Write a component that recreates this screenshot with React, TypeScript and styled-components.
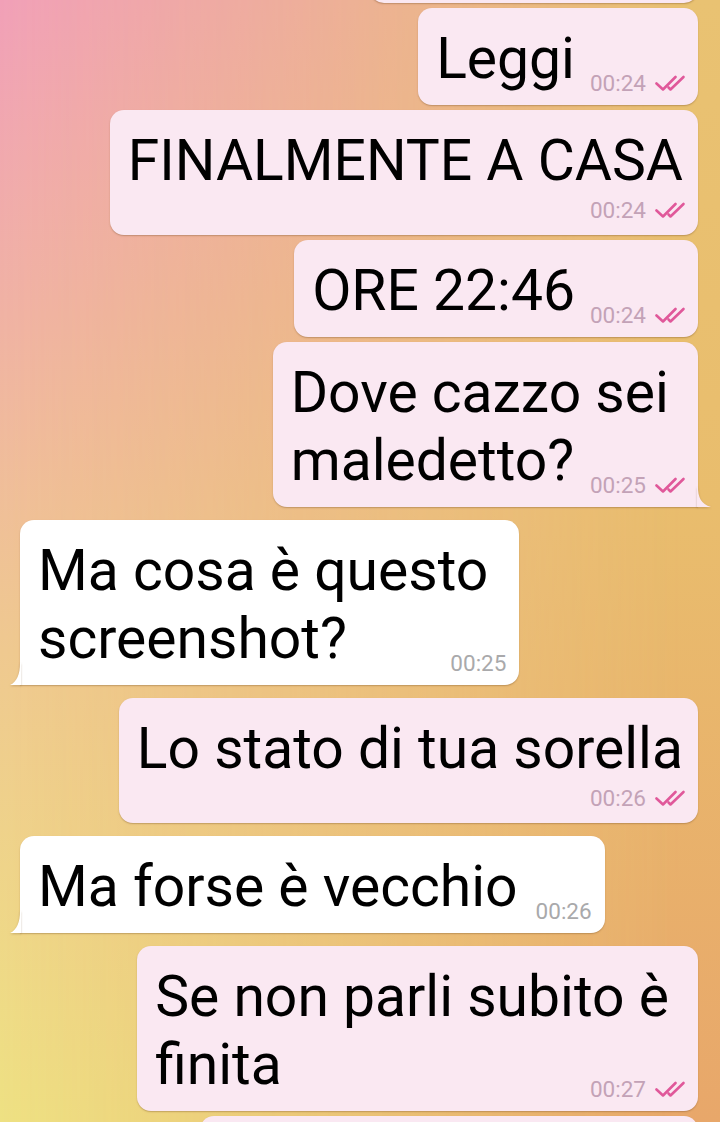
import styled, { createGlobalStyle } from 'styled-components';

const GlobalStyle = createGlobalStyle`
  html, body {
    margin: 0;
    padding: 0;
  }
  body {
    font-family: Roboto, "Noto Sans", "Liberation Sans", sans-serif;
  }
`;

const Screen = styled.div`
  position: relative;
  width: 720px;
  height: 1122px;
  overflow: hidden;
  background: linear-gradient(to bottom, #e9c272 0%, #e9bd6d 45%, #e8a76a 100%);

  &::before {
    content: '';
    position: absolute;
    inset: 0;
    background: linear-gradient(
      to bottom,
      #f1a0b8 0%,
      #f0b2a4 28%,
      #efc990 58%,
      #eee183 100%
    );
    -webkit-mask-image: linear-gradient(to right, #000 0%, rgba(0, 0, 0, 0.55) 45%, transparent 95%);
    mask-image: linear-gradient(to right, #000 0%, rgba(0, 0, 0, 0.55) 45%, transparent 95%);
  }
`;

const Feed = styled.div`
  position: relative;
  display: flex;
  flex-direction: column;
`;

const Bubble = styled.div<{ $out: boolean; $tail?: boolean; $newGroup?: boolean }>`
  position: relative;
  align-self: ${(p) => (p.$out ? 'flex-end' : 'flex-start')};
  margin: ${(p) => (p.$newGroup ? '13px' : '5px')} 22px 0 20px;
  display: flex;
  flex-direction: column;
  padding: 17px ${(p) => (p.$out ? '12px' : '13px')} 12px 18px;
  background: ${(p) => (p.$out ? '#fae8f2' : '#ffffff')};
  border-radius: 14px;
  ${(p) => p.$tail && (p.$out ? 'border-bottom-right-radius: 0;' : 'border-bottom-left-radius: 0;')}
  box-shadow: 0 1px 1.5px rgba(110, 70, 30, 0.35);
`;

const Peek = styled(Bubble)<{ $width: number; $height: number }>`
  width: ${(p) => p.$width}px;
  height: ${(p) => p.$height}px;
  box-sizing: border-box;
  padding: 0;
`;

const Line = styled.div<{ $out: boolean }>`
  font-size: 57px;
  line-height: 68px;
  color: #000;
  white-space: pre;
  padding-right: ${(p) => (p.$out ? '3px' : '4px')};
`;

const LastRow = styled.div`
  display: flex;
  align-items: flex-end;
`;

const Meta = styled.div<{ $out: boolean; $stacked?: boolean }>`
  display: flex;
  align-items: center;
  justify-content: flex-end;
  gap: 9px;
  flex-shrink: 0;
  margin-left: auto;
  padding-left: ${(p) => (p.$stacked ? '0' : p.$out ? '12px' : '14px')};
  margin-top: ${(p) => (p.$stacked ? '4px' : '0')};
  margin-bottom: ${(p) => (p.$stacked ? '2px' : '-1px')};
  font-size: 22.5px;
  line-height: 22px;
  color: ${(p) => (p.$out ? '#c3a2b7' : '#a9a9ab')};
`;

const TailSvg = styled.svg<{ $out: boolean }>`
  position: absolute;
  bottom: 0;
  ${(p) => (p.$out ? 'right: -13px;' : 'left: -10px;')}
  filter: drop-shadow(0 1px 0.8px rgba(110, 70, 30, 0.3));
`;

const Ticks = () => (
  <svg width="31" height="18" viewBox="0 0 31 18" fill="none">
    <path d="M1.5 9.5 L8 15.5 L20.5 3" stroke="#e0589a" strokeWidth="2.6" strokeLinecap="round" strokeLinejoin="round" />
    <path d="M13.5 13.5 L15.5 15.5 L28.5 3" stroke="#e0589a" strokeWidth="2.6" strokeLinecap="round" strokeLinejoin="round" />
  </svg>
);

const Tail = ({ out }: { out: boolean }) =>
  out ? (
    <TailSvg $out width="14" height="20" viewBox="0 0 14 20">
      <path d="M0 0 L1 0 C1 10 4 17 14 20 L0 20 Z" fill="#fae8f2" />
    </TailSvg>
  ) : (
    <TailSvg $out={false} width="11" height="22" viewBox="0 0 11 22">
      <path d="M11 0 L10 0 C10 11 7 19 0 22 L11 22 Z" fill="#ffffff" />
    </TailSvg>
  );

interface MessageData {
  id: number;
  out: boolean;
  lines: string[];
  time: string;
  tail?: boolean;
  stacked?: boolean;
  newGroup?: boolean;
}

// wrapped lines keep their trailing space, as the phone's text layout does
const messages: MessageData[] = [
  { id: 1, out: true, lines: ['Leggi'], time: '00:24' },
  { id: 2, out: true, lines: ['FINALMENTE A CASA'], time: '00:24', stacked: true },
  { id: 3, out: true, lines: ['ORE 22:46'], time: '00:24' },
  { id: 4, out: true, lines: ['Dove cazzo sei ', 'maledetto?'], time: '00:25', tail: true },
  { id: 5, out: false, lines: ['Ma cosa è questo ', 'screenshot?'], time: '00:25', tail: true, newGroup: true },
  { id: 6, out: true, lines: ['Lo stato di tua sorella'], time: '00:26', stacked: true, newGroup: true },
  { id: 7, out: false, lines: ['Ma forse è vecchio'], time: '00:26', tail: true, newGroup: true },
  { id: 8, out: true, lines: ['Se non parli subito è ', 'finita'], time: '00:27', newGroup: true },
];

const Message = ({ msg }: { msg: MessageData }) => {
  const meta = (
    <Meta $out={msg.out} $stacked={msg.stacked}>
      <span>{msg.time}</span>
      {msg.out && <Ticks />}
    </Meta>
  );
  const head = msg.stacked ? msg.lines : msg.lines.slice(0, -1);
  const last = msg.lines[msg.lines.length - 1];

  return (
    <Bubble $out={msg.out} $tail={msg.tail} $newGroup={msg.newGroup}>
      {head.map((line, i) => (
        <Line key={i} $out={msg.out}>
          {line}
        </Line>
      ))}
      {msg.stacked ? (
        meta
      ) : (
        <LastRow>
          <Line $out={msg.out}>{last}</Line>
          {meta}
        </LastRow>
      )}
      {msg.tail && <Tail out={msg.out} />}
    </Bubble>
  );
};

const App = () => (
  <>
    <GlobalStyle />
    <Screen>
      <Feed>
        <Peek $out $width={328} $height={60} style={{ marginTop: -57 }} />
        {messages.map((msg) => (
          <Message key={msg.id} msg={msg} />
        ))}
        <Peek $out $width={498} $height={80} />
      </Feed>
    </Screen>
  </>
);

export default App;
